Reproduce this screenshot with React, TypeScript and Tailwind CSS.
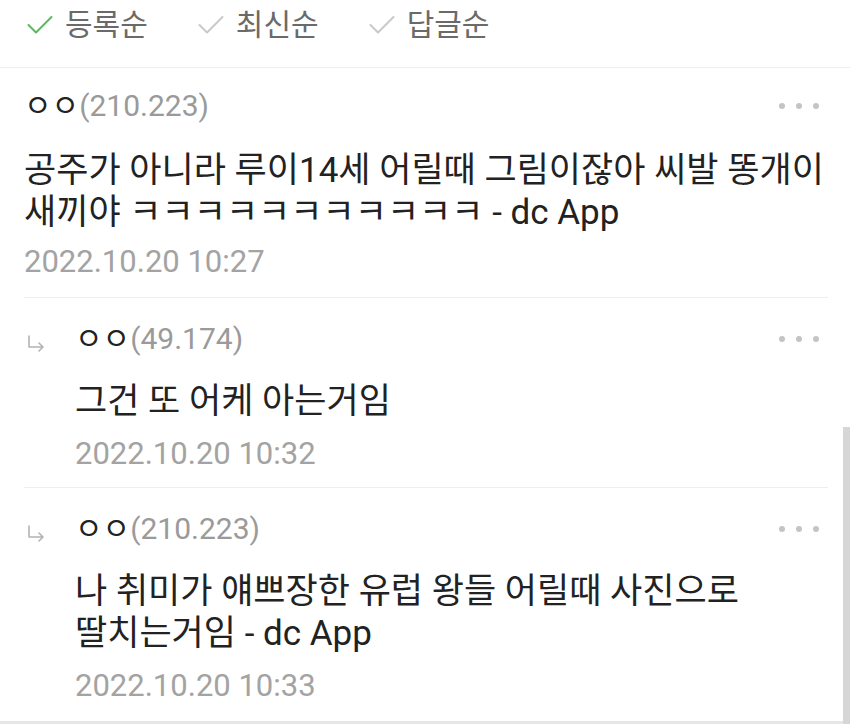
import React from "react";

type Comment = {
    name: string;
    ip: string;
    body: string;
    date: string;
    reply?: boolean;
};

const comments: Comment[] = [
    {
        name: "ㅇㅇ",
        ip: "(210.223)",
        body: "공주가 아니라 루이14세 어릴때 그림이잖아 씨발 똥개이 새끼야 ㅋㅋㅋㅋㅋㅋㅋㅋㅋㅋㅋ - dc App",
        date: "2022.10.20 10:27",
    },
    {
        name: "ㅇㅇ",
        ip: "(49.174)",
        body: "그건 또 어케 아는거임",
        date: "2022.10.20 10:32",
        reply: true,
    },
    {
        name: "ㅇㅇ",
        ip: "(210.223)",
        body: "나 취미가 얘쁘장한 유럽 왕들 어릴때 사진으로 딸치는거임 - dc App",
        date: "2022.10.20 10:33",
        reply: true,
    },
];

function Check({ active }: { active: boolean }) {
    return (
        <svg width="26" height="20" viewBox="0 0 26 20" className="shrink-0">
            <polyline
                points="1.5,10 9,17.5 24.5,2"
                fill="none"
                stroke={active ? "#5cb85c" : "#c9c9c9"}
                strokeWidth="2"
                strokeLinecap="round"
                strokeLinejoin="round"
            />
        </svg>
    );
}

function ReplyArrow() {
    return (
        <svg width="18" height="18" viewBox="0 0 18 18">
            <path d="M2 2 V13 H16 M12 9 L16 13 L12 17" fill="none" stroke="#b3b3b3" strokeWidth="1.6" strokeLinecap="round" strokeLinejoin="round" />
        </svg>
    );
}

function Dots() {
    return (
        <div className="flex items-center gap-[11px] pr-[9px]">
            <span className="w-[6px] h-[6px] rounded-full bg-[#c4c4c4]" />
            <span className="w-[6px] h-[6px] rounded-full bg-[#c4c4c4]" />
            <span className="w-[6px] h-[6px] rounded-full bg-[#c4c4c4]" />
        </div>
    );
}

function CommentItem({ c, last }: { c: Comment; last: boolean }) {
    return (
        <div className={"flex " + (last ? "" : "border-b border-[#eeeeee]")}>
            {c.reply && (
                <div className="w-[51px] shrink-0 pt-[36px] pl-[3px]">
                    <ReplyArrow />
                </div>
            )}
            <div className={"flex-1 " + (c.reply ? "pt-[23px] " + (last ? "pb-[17px]" : "pb-[15px]") : "pt-[20px] pb-[17px]")}>
                <div className="flex items-center justify-between">
                    <div className="text-[30px] leading-[36px]">
                        <span className="text-[#222]">{c.name}</span>
                        <span className="text-[#9a9a9a]">{c.ip}</span>
                    </div>
                    <Dots />
                </div>
                <p className={"text-[35px] leading-[42px] text-[#222] break-keep " + (c.reply ? "mt-[24px] pr-[40px]" : "mt-[26px] pr-0")}>
                    {c.body}
                </p>
                <div className={"text-[31px] leading-[36px] text-[#a3a3a3] " + (c.reply ? "mt-[13px]" : "mt-[10px]")}>{c.date}</div>
            </div>
        </div>
    );
}

export default function App() {
    const sorts = ["등록순", "최신순", "답글순"];
    return (
        <div className="relative w-[850px] h-[724px] overflow-hidden bg-white" style={{ fontFamily: 'Roboto, "Noto Sans CJK KR", sans-serif' }}>
            <div className="flex items-center gap-[50px] pl-[27px] pt-[7px] pb-[24px] border-b border-[#efefef]">
                {sorts.map((s, i) => (
                    <div key={s} className="flex items-center gap-[12px]">
                        <Check active={i === 0} />
                        <span className="text-[30px] leading-[36px] text-[#6a6a6a]">{s}</span>
                    </div>
                ))}
            </div>
            <div className="ml-[24px] mr-[22px]">
                {comments.map((c, i) => (
                    <CommentItem key={i} c={c} last={i === comments.length - 1} />
                ))}
            </div>
            <div className="h-[4px] bg-[#e6e6e6]" />
            <div className="absolute right-0 top-[427px] bottom-0 w-[7px] bg-[#d6d6d6]" />
        </div>
    );
}
